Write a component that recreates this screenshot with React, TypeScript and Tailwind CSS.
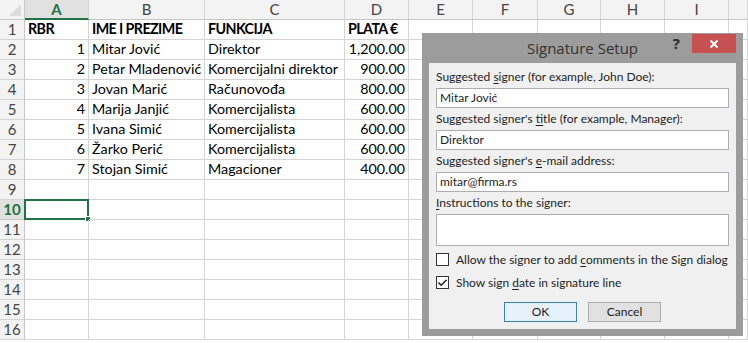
import { Check } from "lucide-react";

const COLS = ["A", "B", "C", "D", "E", "F", "G", "H", "I", ""];

type Row = [string, string, string, string];

const DATA: Row[] = [
  ["RBR", "IME I PREZIME", "FUNKCIJA", "PLATA €"],
  ["1", "Mitar Jović", "Direktor", "1,200.00"],
  ["2", "Petar Mladenović", "Komercijalni direktor", "900.00"],
  ["3", "Jovan Marić", "Računovođa", "800.00"],
  ["4", "Marija Janjić", "Komercijalista", "600.00"],
  ["5", "Ivana Simić", "Komercijalista", "600.00"],
  ["6", "Žarko Perić", "Komercijalista", "600.00"],
  ["7", "Stojan Simić", "Magacioner", "400.00"],
];

const ROWS = Array.from({ length: 16 }, (_, i) => i + 1);

function Sheet() {
  return (
    <div
      className="grid grid-cols-[25px_64px_116px_140px_64px_64px_65px_63px_64px_64px_1fr] auto-rows-[20px] text-[14.3px] leading-none text-black"
      style={{ fontFamily: "Lato, 'Liberation Sans', sans-serif" }}
    >
      {/* corner */}
      <div className="relative border-b border-r border-[#c6c6c6] bg-[#f3f3f3]">
        <svg className="absolute bottom-[3px] right-[3px]" width="12" height="12" viewBox="0 0 12 12">
          <path d="M12 0 L12 12 L0 12 Z" fill="#dcdcdc" />
        </svg>
      </div>
      {COLS.map((c, i) => (
        <div
          key={i}
          className={
            c === "A"
              ? "flex items-center justify-center border-b-2 border-r border-b-[#217346] border-r-[#d4d4d4] bg-[#e1e1e1] text-[15px] font-bold text-[#217346]"
              : "flex items-center justify-center border-b border-r border-b-[#c6c6c6] border-r-[#d4d4d4] bg-[#f3f3f3] text-[15px] text-[#444]"
          }
        >
          {c}
        </div>
      ))}
      {ROWS.map((r) => {
        const d = DATA[r - 1];
        const selected = r === 10;
        return [
          <div
            key={`h${r}`}
            className={
              selected
                ? "flex items-center justify-center border-b border-r border-[#c6c6c6] bg-[#e1e1e1] text-[15px] font-bold text-[#217346]"
                : "flex items-center justify-center border-b border-r border-b-[#d4d4d4] border-r-[#c6c6c6] bg-[#f3f3f3] text-[15px] text-[#444]"
            }
          >
            {r}
          </div>,
          ...COLS.map((_, ci) => {
            const v = d && ci < 4 ? d[ci] : "";
            const bold = r === 1;
            const right = !bold && (ci === 0 || ci === 3);
            return (
              <div
                key={`${r}-${ci}`}
                className={`relative flex items-center overflow-visible whitespace-nowrap border-b border-r border-[#d4d4d4] px-[3px] ${
                  right ? "justify-end" : ""
                } ${bold ? "font-bold tracking-[-0.6px]" : ""}`}
              >
                {v}
                {selected && ci === 0 && (
                  <>
                    <div className="absolute -left-px -top-px bottom-[-1px] right-[-1px] border-2 border-[#217346]" />
                    <div className="absolute bottom-[-3px] right-[-3px] h-[6px] w-[6px] border border-white bg-[#217346]" />
                  </>
                )}
              </div>
            );
          }),
        ];
      })}
    </div>
  );
}

function U({ children }: { children: string }) {
  return <span className="underline underline-offset-2">{children}</span>;
}

function Field({ label, value }: { label: React.ReactNode; value: string }) {
  return (
    <div className="flex flex-col">
      <div className="h-[21px] leading-[20px]">{label}</div>
      <div className="flex h-[20px] items-center border border-[#abadb3] bg-white px-[3px]">{value}</div>
    </div>
  );
}

function Checkbox({ checked, children }: { checked?: boolean; children: React.ReactNode }) {
  return (
    <div className="flex h-[17px] items-center gap-[7px]">
      <div className="flex h-[13px] w-[13px] shrink-0 items-center justify-center border border-[#333] bg-white">
        {checked && <Check size={12} strokeWidth={3.5} className="text-[#222]" />}
      </div>
      <span className="whitespace-nowrap">{children}</span>
    </div>
  );
}

function Dialog() {
  return (
    <div
      className="absolute left-[422px] top-[33px] flex h-[303px] w-[321px] flex-col bg-[#9c9c9c] px-[7px] pb-[7px] text-[12px] text-[#1e1e1e]"
      style={{ fontFamily: "Lato, 'Open Sans', sans-serif" }}
    >
      <div className="relative flex h-[30px] shrink-0 items-center justify-center">
        <span className="text-[15px] text-[#333]" style={{ fontFamily: "'Open Sans', sans-serif" }}>
          Signature Setup
        </span>
        <span
          className="absolute right-[56px] top-[1px] flex h-[19px] items-center text-[15px] font-bold text-[#2b2b2b]"
          style={{ fontFamily: "'Open Sans', sans-serif" }}
        >
          ?
        </span>
        <div className="absolute right-0 top-[1px] flex h-[19px] w-[44px] items-center justify-center bg-[#c75050]">
          <svg width="10" height="10" viewBox="0 0 10 10">
            <path d="M1.5 1.5 L8.5 8.5 M8.5 1.5 L1.5 8.5" stroke="white" strokeWidth="2" />
          </svg>
        </div>
      </div>
      <div className="flex flex-1 flex-col bg-[#f0f0f0] px-[7px] pt-[4px]">
        <div className="flex flex-col gap-[1px]">
          <Field
            label={
              <>
                Suggested <U>s</U>igner (for example, John Doe):
              </>
            }
            value="Mitar Jović"
          />
          <Field
            label={
              <>
                Suggested signer's <U>t</U>itle (for example, Manager):
              </>
            }
            value="Direktor"
          />
          <Field
            label={
              <>
                Suggested signer's <U>e</U>-mail address:
              </>
            }
            value="mitar@firma.rs"
          />
          <div className="flex flex-col">
            <div className="h-[21px] leading-[20px]">
              <U>I</U>nstructions to the signer:
            </div>
            <div className="h-[32px] border border-[#abadb3] bg-white" />
          </div>
        </div>
        <div className="mt-[5px] flex flex-col gap-[6px]">
          <Checkbox>
            Allow the signer to add <U>c</U>omments in the Sign dialog
          </Checkbox>
          <Checkbox checked>
            Show sign <U>d</U>ate in signature line
          </Checkbox>
        </div>
        <div className="mt-[11px] flex justify-center gap-[11px]">
          <button className="h-[20px] w-[73px] border border-[#3c7fb1] bg-[#e5f1fb] text-[12px] leading-none">OK</button>
          <button className="h-[20px] w-[73px] border border-[#adadad] bg-[#e1e1e1] text-[12px] leading-none">Cancel</button>
        </div>
      </div>
    </div>
  );
}

export default function App() {
  return (
    <div className="relative h-[343px] w-[748px] overflow-hidden bg-white">
      <Sheet />
      <Dialog />
    </div>
  );
}
